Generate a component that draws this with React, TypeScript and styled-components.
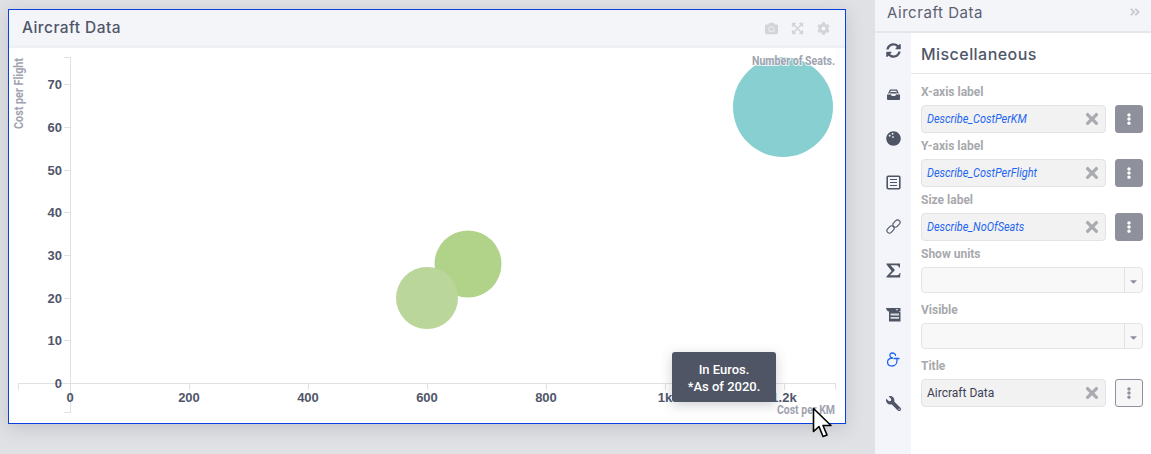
import React from 'react';
import styled, { createGlobalStyle } from 'styled-components';
import { FaCamera, FaCog, FaSyncAlt, FaBowlingBall, FaWrench, FaTimes, FaEllipsisV, FaCaretDown, FaAngleDoubleRight, FaExpandArrowsAlt } from 'react-icons/fa';

const GlobalStyle = createGlobalStyle`
  html, body {
    margin: 0;
    padding: 0;
    height: 100%;
    background: #e0e1e5;
    font-family: Roboto, sans-serif;
    overflow: hidden;
  }
`;

const Page = styled.div`
  display: flex;
  width: 1151px;
  height: 454px;
  position: relative;
`;

const Stage = styled.div`
  width: 875px;
  padding: 9px 0 0 8px;
  box-sizing: border-box;
`;

const Card = styled.div`
  width: 838px;
  height: 415px;
  box-sizing: border-box;
  border: 1px solid #0a3fe0;
  background: #fff;
  box-shadow: 0 4px 16px rgba(60, 64, 80, 0.18);
  position: relative;
`;

const CardHeader = styled.div`
  height: 38px;
  box-sizing: border-box;
  border-bottom: 3px solid #eff0f4;
  background: #f4f5f9;
  display: flex;
  align-items: center;
  justify-content: space-between;
  padding: 0 15px 0 13px;
`;

const CardTitle = styled.div`
  font-family: Inter, sans-serif;
  font-size: 15.5px;
  font-weight: 500;
  color: #50566a;
  letter-spacing: 0.45px;
`;

const HeaderTools = styled.div`
  display: flex;
  align-items: center;
  gap: 13px;
  padding-top: 1px;
  color: #d3d4d8;
  font-size: 13px;
`;

const Chart = styled.svg`
  display: block;
  width: 836px;
  height: 375px;
`;

const TickLabel = styled.text`
  font-family: 'Liberation Sans', sans-serif;
  font-size: 13px;
  font-weight: 700;
  fill: #50566a;
`;

const AxisName = styled.text`
  font-family: Roboto, sans-serif;
  font-size: 12px;
  font-weight: 700;
  fill: #a0a3b0;
  paint-order: stroke;
  stroke: rgba(255, 255, 255, 0.75);
  stroke-width: 2px;
`;

const Tooltip = styled.div`
  position: absolute;
  left: 663px;
  top: 342px;
  width: 104px;
  height: 50px;
  box-sizing: border-box;
  border-radius: 3px;
  background: #4f5565;
  box-shadow: 0 3px 12px rgba(60, 64, 80, 0.25);
  color: #fff;
  font-size: 13px;
  font-weight: 500;
  line-height: 17px;
  text-align: center;
  padding-top: 9px;
`;

const Cursor = styled.svg`
  position: absolute;
  left: 812px;
  top: 407px;
`;

const Panel = styled.div`
  width: 276px;
  height: 454px;
  display: flex;
  flex-direction: column;
  background: #fff;
`;

const PanelHeader = styled.div`
  height: 33px;
  box-sizing: border-box;
  border-bottom: 2px solid #e6e7eb;
  background: #f4f5f9;
  display: flex;
  align-items: center;
  justify-content: space-between;
  padding: 0 10px 7px 12px;
`;

const PanelTitle = styled.div`
  font-family: Inter, sans-serif;
  font-size: 15px;
  color: #5b6072;
  letter-spacing: 0.55px;
`;

const Collapse = styled.div`
  display: flex;
  color: #c9cbd1;
  font-size: 12px;
`;

const PanelBody = styled.div`
  flex: 1;
  display: flex;
`;

const Rail = styled.div`
  width: 36px;
  background: #f4f5fa;
  display: flex;
  flex-direction: column;
  align-items: center;
  padding-top: 9px;
`;

const RailIcon = styled.div<{ $active?: boolean; $flip?: boolean }>`
  height: 44.1px;
  box-sizing: border-box;
  display: flex;
  justify-content: center;
  padding-top: 1px;
  font-size: 15px;
  color: ${p => (p.$active ? '#1f66f0' : '#4f5565')};
  svg {
    transform: ${p => (p.$flip ? 'scaleX(-1)' : 'none')};
  }
`;

const Content = styled.div`
  flex: 1;
`;

const SectionHead = styled.div`
  height: 41px;
  box-sizing: border-box;
  border-bottom: 1px solid #e3e4e8;
  padding: 11px 0 0 10px;
  font-family: Inter, sans-serif;
  font-size: 16px;
  font-weight: 500;
  color: #50566a;
  letter-spacing: 0.45px;
  margin-bottom: 5px;
`;

const Fields = styled.div`
  padding: 0 8px 0 10px;
`;

const Label = styled.div<{ $spaced?: boolean }>`
  height: 26px;
  line-height: 27px;
  font-size: 12px;
  font-weight: 700;
  color: #a7a9ad;
  margin-top: ${p => (p.$spaced ? 4 : 0)}px;
`;

const Row = styled.div`
  display: flex;
  justify-content: space-between;
  height: 28px;
`;

const TextBox = styled.div`
  width: 185px;
  box-sizing: border-box;
  background: #f2f2f3;
  border: 1px solid #e2e3e6;
  border-radius: 4px;
  display: flex;
  align-items: center;
  justify-content: space-between;
  padding: 0 4px 0 5px;
`;

const Value = styled.span`
  font-size: 12px;
  color: #3d4254;
`;

const BoundValue = styled(Value)`
  display: inline-block;
  font-style: italic;
  color: #1f66f0;
  transform: scaleX(0.91);
  transform-origin: left center;
`;

const Clear = styled.span`
  display: flex;
  color: #a9abb0;
  font-size: 18px;
`;

const MenuButton = styled.div<{ $bound?: boolean }>`
  width: 28px;
  box-sizing: border-box;
  border-radius: 3px;
  border: 1px solid #8e909c;
  background: ${p => (p.$bound ? '#8e909c' : '#f6f6f7')};
  color: ${p => (p.$bound ? '#fff' : '#8e909c')};
  display: flex;
  align-items: center;
  justify-content: center;
  font-size: 12px;
`;

const Select = styled.div`
  height: 26px;
  box-sizing: border-box;
  background: #f8f8f9;
  border: 1px solid #e2e3e6;
  border-radius: 4px;
  display: flex;
  justify-content: flex-end;
`;

const Caret = styled.div`
  width: 18px;
  box-sizing: border-box;
  border-left: 1px solid #e2e3e6;
  color: #8e909c;
  display: flex;
  align-items: center;
  justify-content: center;
  font-size: 11px;
  padding-top: 2px;
`;

const yTicks = [70, 60, 50, 40, 30, 20, 10, 0];
const xTicks = [
  { x: 61, label: '0' },
  { x: 180, label: '200' },
  { x: 299, label: '400' },
  { x: 418, label: '600' },
  { x: 537, label: '800' },
  { x: 656, label: '1k' },
  { x: 775, label: '1.2k' },
];
const tickY = (v: number) => 335 - v * 4.27;

const boundFields = [
  { label: 'X-axis label', value: 'Describe_CostPerKM' },
  { label: 'Y-axis label', value: 'Describe_CostPerFlight' },
  { label: 'Size label', value: 'Describe_NoOfSeats' },
];

const DrawerIcon = () => (
  <svg width="15" height="15" viewBox="0 0 15 15" fill="currentColor">
    <path d="M4 2.5H11L13 6.5H11.5L10.2 3.7H4.8L3.5 6.5H2Z" />
    <path d="M4.5 5H10.5L11 6.5H4Z" />
    <path d="M1 7.5H5L5.8 9H9.2L10 7.5H14V12A1 1 0 0 1 13 13H2A1 1 0 0 1 1 12Z" />
  </svg>
);

const NoteIcon = () => (
  <svg width="15" height="15" viewBox="0 0 15 15" fill="none" stroke="currentColor">
    <rect x="1.2" y="1.2" width="12.6" height="12.6" rx="1" strokeWidth="1.6" />
    <path d="M4 4.5H11M4 7.5H11M4 10.5H11" strokeWidth="1" />
  </svg>
);

const ChainIcon = () => (
  <svg width="15" height="15" viewBox="0 0 15 15" fill="none" stroke="currentColor" strokeWidth="1.1">
    <rect x="8" y="0.5" width="5" height="8" rx="2.5" transform="rotate(45 10.5 4.5)" />
    <rect x="2" y="6.5" width="5" height="8" rx="2.5" transform="rotate(45 4.5 10.5)" />
  </svg>
);

const SigmaIcon = () => (
  <svg width="15" height="15" viewBox="0 0 15 15">
    <path d="M0.5 0.5H14V4.5H13C12.6 3 12 2.3 10 2.3H4.5L9 7L4 12.2H11C12.6 12.2 13.2 11.5 13.6 10H14.5L14 14.5H0.5V13.5L5.6 8L0.5 1.5Z" fill="currentColor" />
  </svg>
);

const PanelIcon = () => (
  <svg width="15" height="15" viewBox="0 0 15 15">
    <path d="M0 0H14.5V3.5H13V4H3V3.5C1.5 3.5 0.5 2 0 0Z" fill="currentColor" />
    <path d="M9.5 1.2H12.5L11 2.5Z" fill="#f4f5fa" />
    <path d="M3 4H14.5V13.5H3Z" fill="currentColor" />
    <path d="M4.5 5.5H13V7.5H4.5ZM4.5 9H13V10.8H4.5Z" fill="#d9dbe2" />
  </svg>
);

const AmpersandIcon = () => (
  <svg width="14" height="16" viewBox="0 0 14 16" fill="none" stroke="currentColor" strokeWidth="1.3" strokeLinecap="round">
    <path d="M9.5 3.5C9.5 2 8 1 6.5 1C4.5 1 3.5 2.5 4 4C4.3 5.2 5.5 6 7 6C4.5 6 1.5 7 1.5 10C1.5 12.5 3.5 14 6 14C9 14 11 11.5 11 8.5V6.5" />
    <path d="M8 6.5H13" />
  </svg>
);

const BubbleChart: React.FC = () => (
  <Chart viewBox="0 0 836 375">
    <g stroke="#e0e1e4" strokeWidth="1" fill="none" shapeRendering="crispEdges">
      <path d="M55 9.5H61.5V364.5H55" />
      {yTicks.map(v => (
        <path key={v} d={`M55 ${Math.round(tickY(v)) + 0.5}H61`} />
      ))}
      <path d="M9.5 342V335.5H826.5V342" />
      {xTicks.map(t => (
        <path key={t.label} d={`M${t.x + 0.5} 335V342`} />
      ))}
    </g>
    {yTicks.map(v => (
      <TickLabel key={v} x="53" y={tickY(v) + 5} textAnchor="end">{v}</TickLabel>
    ))}
    {xTicks.map(t => (
      <TickLabel key={t.label} x={t.x} y="354" textAnchor="middle">{t.label}</TickLabel>
    ))}
    <circle cx="774" cy="59" r="50" fill="#87cfd0" />
    <circle cx="459" cy="216" r="33.5" fill="#b1d389" />
    <circle cx="418" cy="250" r="31" fill="#bbd69a" />
    <AxisName x="743" y="17" textLength="83" lengthAdjust="spacingAndGlyphs">Number of Seats.</AxisName>
    <AxisName x="768" y="366" textLength="58" lengthAdjust="spacingAndGlyphs">Cost per KM</AxisName>
    <AxisName transform="translate(14 81) rotate(-90)" textLength="71" lengthAdjust="spacingAndGlyphs">Cost per Flight</AxisName>
  </Chart>
);

const App: React.FC = () => (
  <Page>
    <GlobalStyle />
    <Stage>
      <Card>
        <CardHeader>
          <CardTitle>Aircraft Data</CardTitle>
          <HeaderTools>
            <FaCamera />
            <FaExpandArrowsAlt />
            <FaCog />
          </HeaderTools>
        </CardHeader>
        <BubbleChart />
        <Tooltip>In Euros.<br />*As of 2020.</Tooltip>
      </Card>
    </Stage>
    <Panel>
      <PanelHeader>
        <PanelTitle>Aircraft Data</PanelTitle>
        <Collapse><FaAngleDoubleRight /></Collapse>
      </PanelHeader>
      <PanelBody>
        <Rail>
          <RailIcon><FaSyncAlt /></RailIcon>
          <RailIcon><DrawerIcon /></RailIcon>
          <RailIcon><FaBowlingBall /></RailIcon>
          <RailIcon><NoteIcon /></RailIcon>
          <RailIcon><ChainIcon /></RailIcon>
          <RailIcon><SigmaIcon /></RailIcon>
          <RailIcon><PanelIcon /></RailIcon>
          <RailIcon $active><AmpersandIcon /></RailIcon>
          <RailIcon $flip><FaWrench /></RailIcon>
        </Rail>
        <Content>
          <SectionHead>Miscellaneous</SectionHead>
          <Fields>
            {boundFields.map(f => (
              <React.Fragment key={f.label}>
                <Label>{f.label}</Label>
                <Row>
                  <TextBox>
                    <BoundValue>{f.value}</BoundValue>
                    <Clear><FaTimes /></Clear>
                  </TextBox>
                  <MenuButton $bound><FaEllipsisV /></MenuButton>
                </Row>
              </React.Fragment>
            ))}
            <Label>Show units</Label>
            <Select><Caret><FaCaretDown /></Caret></Select>
            <Label $spaced>Visible</Label>
            <Select><Caret><FaCaretDown /></Caret></Select>
            <Label $spaced>Title</Label>
            <Row>
              <TextBox>
                <Value>Aircraft Data</Value>
                <Clear><FaTimes /></Clear>
              </TextBox>
              <MenuButton><FaEllipsisV /></MenuButton>
            </Row>
          </Fields>
        </Content>
      </PanelBody>
    </Panel>
    <Cursor width="22" height="32" viewBox="0 0 22 32">
      <path d="M1.5 1.5V24.5L7 19.5L11 29.5L15 28L11 18.5H19Z" fill="#fff" stroke="#000" strokeWidth="1.6" strokeLinejoin="round" />
    </Cursor>
  </Page>
);

export default App;
